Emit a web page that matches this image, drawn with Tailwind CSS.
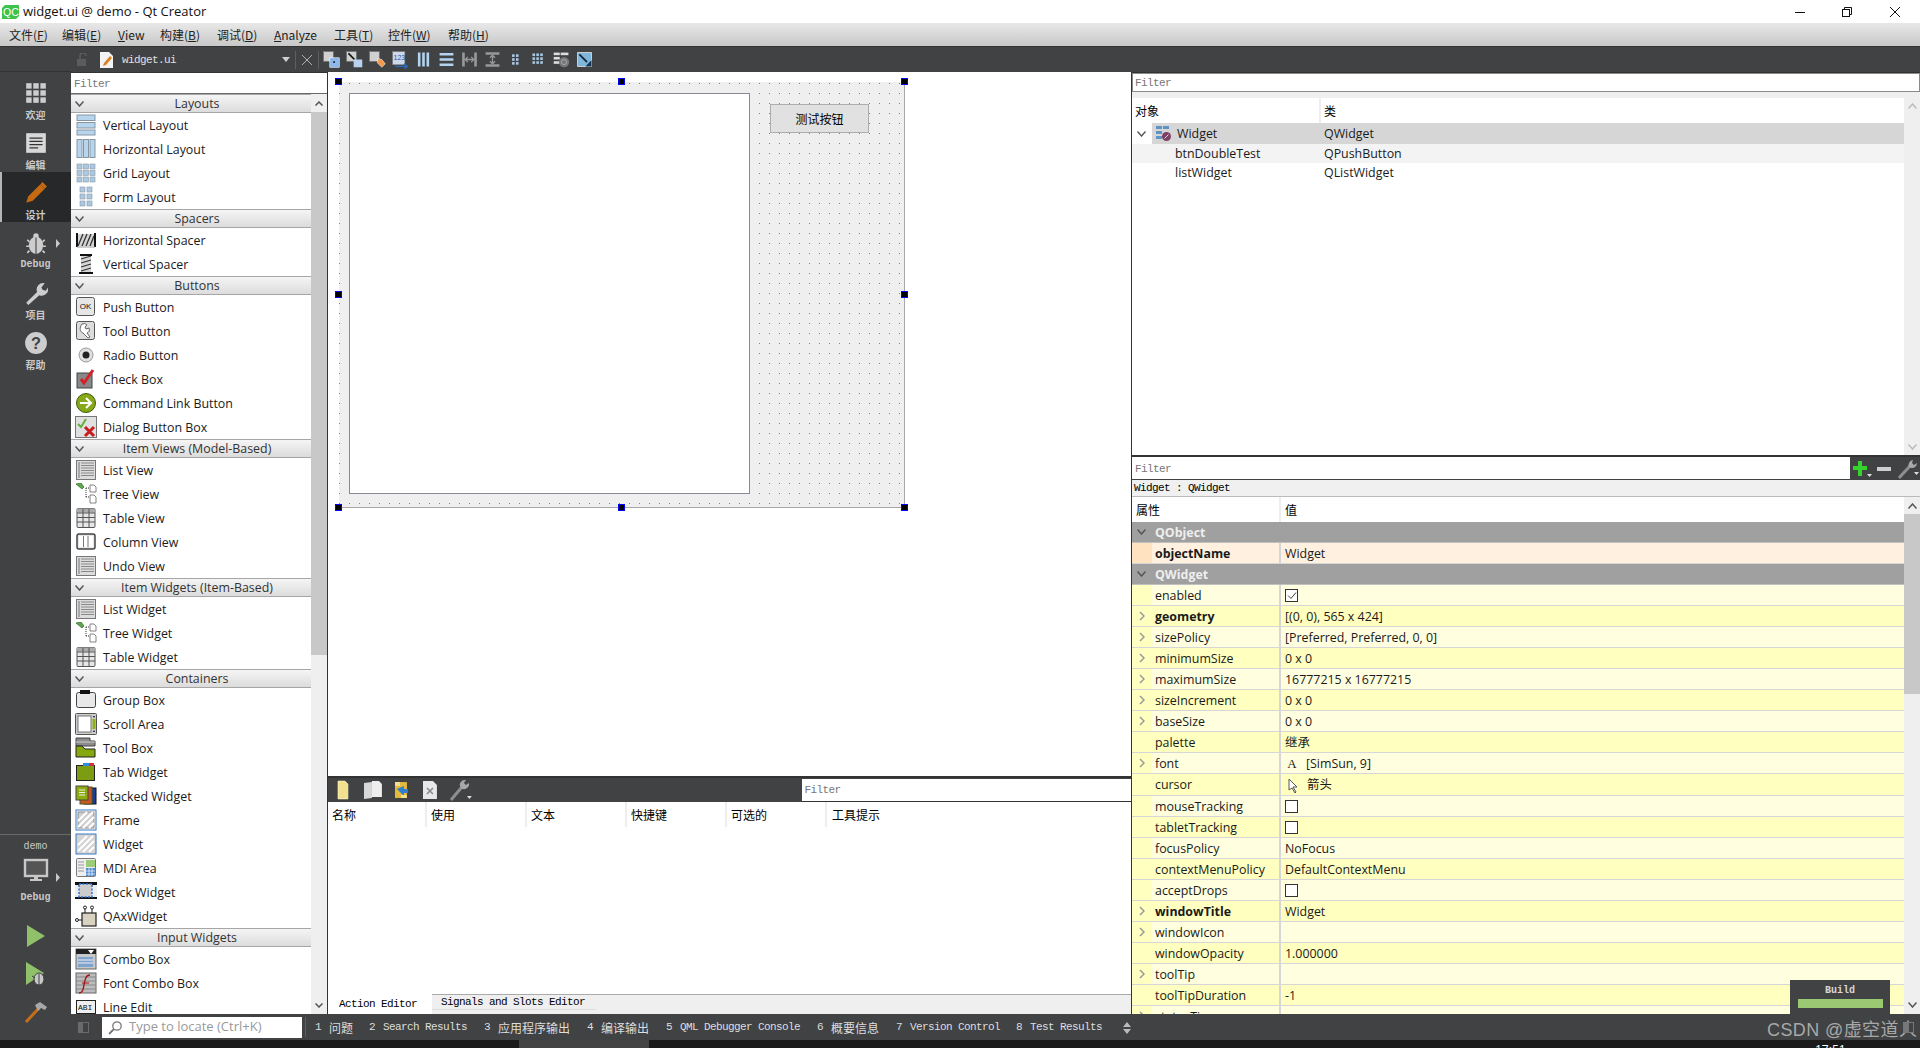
<!DOCTYPE html>
<html lang="en">
<head>
  <meta charset="UTF-8" />
  <title>widget.ui @ demo - Qt Creator</title>
  <script src="https://cdn.jsdelivr.net/npm/@tailwindcss/browser@4"></script>
</head>
<body class="w-[1920px] h-[1048px] overflow-hidden relative flex flex-col bg-[#404244] text-[12.4px] text-[#1a1a1a] font-['Open_Sans','Noto_Sans_CJK_SC',sans-serif]">

  <!-- Title bar -->
  <header class="h-[23px] bg-white flex items-center shrink-0">
    <svg class="ml-[2px]" width="17" height="16" viewBox="0 0 17 16"><path d="M3 1h14v11l-3 3H0V4z" fill="#3fc24b"/><text x="1" y="12" font-size="10.5" font-family="Liberation Sans" fill="#fff">QC</text></svg>
    <span class="ml-[4px] text-[13px] leading-none text-[#111]">widget.ui @ demo - Qt Creator</span>
    <div class="ml-auto flex items-center h-full">
      <svg class="mr-[35px]" width="12" height="12" viewBox="0 0 12 12"><path d="M1 6.5h10" stroke="#111"/></svg>
      <svg class="mr-[36px]" width="12" height="12" viewBox="0 0 12 12" fill="none" stroke="#111"><rect x="1.5" y="3.5" width="7" height="7"/><path d="M3.500 3.500v-2h7v7h-2"/></svg>
      <svg class="mr-[19px]" width="12" height="12" viewBox="0 0 12 12"><path d="M1 1l10 10M11 1L1 11" stroke="#111"/></svg>
    </div>
  </header>

  <!-- Menu bar -->
  <nav id="menu" class="h-[24px] shrink-0 flex items-center pl-[9px] bg-[linear-gradient(#e8e8e8,#c8c8c8)] border-b border-[#333]"></nav>

  <div class="flex-1 flex min-h-0">
    <!-- Mode sidebar -->
    <aside class="w-[71px] shrink-0 flex flex-col bg-[#404244] text-[#c9c9c9]">
      <div class="h-[25px] shrink-0 border-b border-[#333]"></div>
      <div id="modes" class="flex flex-col"></div>
      <div class="flex-1"></div>
      <div class="border-t border-[#6a6a6a] flex flex-col items-center relative pb-[9px]">
        <div class="h-[22px] flex items-center text-[10px] font-['Liberation_Mono']">demo</div>
        <div class="h-[28px] flex items-center">
          <svg width="26" height="26" viewBox="0 0 26 26"><rect x="2" y="2" width="22" height="16" fill="#555" stroke="#c8c8c8" stroke-width="2.4"/><path d="M11 18h4v3h4v2H7v-2h4z" fill="#c8c8c8"/></svg>
        </div>
        <svg class="absolute left-[55px] top-[38px]" width="6" height="9" viewBox="0 0 6 9"><path d="M1 0l4 4.5L1 9z" fill="#c8c8c8"/></svg>
        <div class="h-[24px] flex items-center text-[10px] font-bold font-['Liberation_Mono']">Debug</div>
        <div class="mt-[8px] h-[38px] flex items-center">
          <svg width="20" height="24" viewBox="0 0 20 24"><path d="M1 1l18 11L1 23z" fill="#90c069"/></svg>
        </div>
        <div class="h-[38px] flex items-center">
          <svg width="22" height="26" viewBox="0 0 22 26"><path d="M1 1l18 11L1 24z" fill="#90c069"/><ellipse cx="14" cy="18" rx="5" ry="6" fill="#c8c8c8" stroke="#404244"/><path d="M14 13v11M7 15l3 2M21 15l-3 2M7 22l3-2M21 22l-3-2" stroke="#404244"/></svg>
        </div>
        <div class="h-[38px] flex items-center">
          <svg width="24" height="24" viewBox="0 0 24 24"><path d="M2 22L15 8" stroke="#c76f17" stroke-width="3"/><path d="M11 5l5-3 7 5-2 3-4-2-3 3z" fill="#a8a8a8"/></svg>
        </div>
      </div>
    </aside>

    <div class="flex-1 flex flex-col min-w-0">
      <!-- Editor toolbar -->
      <div class="h-[25px] shrink-0 bg-[#404244] flex items-center relative">
        <svg class="ml-[5px]" width="14" height="14" viewBox="0 0 14 14"><rect x="1" y="6" width="9" height="7" fill="#5c5c5c"/><path d="M4 6V3a3 3 0 0 1 6 0" fill="none" stroke="#5c5c5c" stroke-width="1.5"/></svg>
        <svg class="ml-[9px]" width="15" height="18" viewBox="0 0 15 18"><path d="M1 1h9l4 4v12H1z" fill="#f3f3f3"/><path d="M4 15l1-3 6-7 2 2-6 7z" fill="#dc7f24"/></svg>
        <span class="ml-[8px] w-[160px] pt-[2px] text-[11px] tracking-[-0.6px] text-[#e0e0e0] font-['Liberation_Mono']">widget.ui</span>
        <svg width="8" height="5" viewBox="0 0 8 5"><path d="M0 0h8L4 5z" fill="#d0d0d0"/></svg>
        <div class="ml-[5px] w-px h-[18px] bg-[#5e5e5e]"></div>
        <svg class="ml-[6px]" width="10" height="10" viewBox="0 0 10 10"><path d="M0 0l10 10M10 0L0 10" stroke="#b0b0b0"/></svg>
        <div class="ml-[6px] w-px h-[18px] bg-[#5e5e5e]"></div>
        <div id="formTools" class="flex items-center ml-[1px]"></div>
      </div>

      <div class="flex-1 flex min-h-0">
        <!-- Widget box -->
        <section class="w-[256px] shrink-0 flex flex-col bg-white border-t border-[#333] min-h-0">
          <div class="h-[20px] shrink-0 flex items-center pl-[3px] pt-[2px] bg-white text-[#777] text-[11px] tracking-[-0.6px] font-['Liberation_Mono']">Filter</div>
          <div class="h-px shrink-0 bg-[#6b6b6b]"></div>
          <div class="flex-1 flex min-h-0">
            <div id="widgetBox" class="w-[240px] overflow-hidden"></div>
            <div class="w-[16px] flex flex-col items-center bg-[#efefef] relative">
              <div class="h-[18px] flex items-center"><svg width="8" height="5" viewBox="0 0 8 5"><path d="M0.5 4.5L4 1l3.5 3.5" fill="none" stroke="#555" stroke-width="1.5"/></svg></div>
              <div class="w-full h-[543px] bg-[#c8c8c8]"></div>
              <div class="mt-auto h-[18px] flex items-center"><svg width="8" height="5" viewBox="0 0 8 5"><path d="M0.5 0.5L4 4l3.5-3.5" fill="none" stroke="#555" stroke-width="1.5"/></svg></div>
            </div>
          </div>
        </section>
        <div class="w-px shrink-0 bg-[#333]"></div>

        <!-- Central form + action editor -->
        <section class="w-[803px] shrink-0 flex flex-col">
          <div class="h-[704px] shrink-0 bg-white pl-[11px] pt-[10px]">
            <div class="relative w-[566px] h-[426px] bg-[#efefef] [background-image:radial-gradient(circle_at_0.5px_1.5px,#808080_0.6px,transparent_0.9px)] [background-size:10px_10px] border-r border-b border-[#a8a8a8]">
              <div class="absolute left-[10px] top-[11px] w-[401px] h-[401px] bg-white border border-[#8a8a96]"></div>
              <div class="absolute left-[431px] top-[22px] w-[99px] h-[29px] bg-[#e1e1e1] border border-[#adadad] flex items-center justify-center text-[12px] text-black font-['Noto_Sans_CJK_SC',sans-serif]">测试按钮</div>
              <div class="absolute left-[-4px] top-[-4px] w-[7px] h-[7px] bg-black border border-[#0000ff]"></div>
              <div class="absolute left-[279px] top-[-4px] w-[7px] h-[7px] bg-black border border-[#0000ff]"></div>
              <div class="absolute left-[562px] top-[-4px] w-[7px] h-[7px] bg-black border border-[#0000ff]"></div>
              <div class="absolute left-[-4px] top-[209px] w-[7px] h-[7px] bg-black border border-[#0000ff]"></div>
              <div class="absolute left-[562px] top-[209px] w-[7px] h-[7px] bg-black border border-[#0000ff]"></div>
              <div class="absolute left-[-4px] top-[422px] w-[7px] h-[7px] bg-black border border-[#0000ff]"></div>
              <div class="absolute left-[279px] top-[422px] w-[7px] h-[7px] bg-black border border-[#0000ff]"></div>
              <div class="absolute left-[562px] top-[422px] w-[7px] h-[7px] bg-black border border-[#0000ff]"></div>
            </div>
          </div>
          <div class="h-[2px] shrink-0 bg-[#333]"></div>
          <div class="h-[24px] shrink-0 bg-[#404244] flex items-center">
            <svg class="ml-[7px]" width="16" height="20" viewBox="0 0 16 20"><path d="M3 1h7l3 3v15H3z" fill="#f3e08e" stroke="#fff6c8" stroke-width=".6"/></svg>
            <svg class="ml-[12px]" width="20" height="20" viewBox="0 0 20 20"><path d="M1 3l8-1v16l-8 1z" fill="#d8d8d8"/><path d="M9 1h7l3 3v13H9z" fill="#eee"/></svg>
            <svg class="ml-[10px]" width="18" height="20" viewBox="0 0 18 20"><path d="M2 2h12v16H2z" fill="#e3b93e"/><path d="M4 9l7-3v3h4v4h-4v3z" fill="#2f7fd0"/><path d="M2 2h5v4H2zM8 15h6v3H8z" fill="#f3e08e"/></svg>
            <svg class="ml-[11px]" width="16" height="20" viewBox="0 0 16 20"><path d="M1 1h10l4 4v14H1z" fill="#e8e8e8"/><path d="M5 8l6 6M11 8l-6 6" stroke="#888" stroke-width="1.5"/></svg>
            <svg class="ml-[12px]" width="22" height="22" viewBox="0 0 22 22"><path d="M1 21L12 8" stroke="#8e8e8e" stroke-width="3"/><path d="M11 9a5 5 0 0 1 5-8l-2 3 2 2 3-2a5 5 0 0 1-8 5z" fill="#a8a8a8"/><path d="M17 17h5l-2.500 3z" fill="#ddd"/></svg>
            <div class="ml-[330px] w-[331px] h-[23px] bg-white border-b border-[#333] flex items-center pl-[3px] pt-[2px] text-[#777] text-[11px] tracking-[-0.6px] font-['Liberation_Mono']">Filter</div>
          </div>
          <div class="h-[25px] shrink-0 bg-white flex text-[12px] font-['Noto_Sans_CJK_SC',sans-serif] text-black">
            <div class="w-[99px] pl-[4px] flex items-center border-r-2 border-[#eee]">名称</div>
            <div class="w-[100px] pl-[4px] flex items-center border-r-2 border-[#eee]">使用</div>
            <div class="w-[100px] pl-[4px] flex items-center border-r-2 border-[#eee]">文本</div>
            <div class="w-[100px] pl-[4px] flex items-center border-r-2 border-[#eee]">快捷键</div>
            <div class="w-[100px] pl-[4px] flex items-center border-r-2 border-[#eee]">可选的</div>
            <div class="pl-[5px] flex items-center">工具提示</div>
          </div>
          <div class="flex-1 bg-white"></div>
          <div class="h-[20px] shrink-0 bg-[#efefef] border-t border-[#aaa] flex text-[11px] tracking-[-0.6px] text-black font-['Liberation_Mono']">
            <div class="w-[104px] h-[20px] -mt-px bg-white pl-[11px] flex items-center">Action Editor</div>
            <div class="w-[164px] h-[15px] pl-[9px] pt-[1px] flex items-center border-b border-[#ddd]">Signals and Slots Editor</div>
          </div>
        </section>
        <div class="w-px shrink-0 bg-[#333]"></div>

        <!-- Object inspector + property editor -->
        <section class="flex-1 flex flex-col min-w-0 bg-white">
          <div class="h-[383px] shrink-0 flex flex-col border-t border-[#333]">
            <div class="h-[19px] shrink-0 flex items-center pl-[2px] pt-[2px] border border-[#8a8a8a] text-[#777] text-[11px] tracking-[-0.6px] font-['Liberation_Mono']">Filter</div>
            <div class="h-[6px] shrink-0 bg-[#efefef]"></div>
            <div class="flex-1 flex min-h-0">
              <div class="flex-1">
                <div class="h-[25px] flex text-[12px] font-['Noto_Sans_CJK_SC',sans-serif] text-black">
                  <div class="w-[189px] pl-[3px] flex items-center border-r-2 border-[#eee]">对象</div>
                  <div class="pl-[3px] flex items-center">类</div>
                </div>
                <div class="h-[21px] flex items-center">
                  <svg class="ml-[5px]" width="9" height="6" viewBox="0 0 9 6"><path d="M.5 .5L4.500 5 8.500 .5" fill="none" stroke="#555" stroke-width="1.400"/></svg>
                  <div class="ml-[6px] flex-1 h-full bg-[#d6d6d6] flex items-center">
                    <svg class="ml-[3px]" width="17" height="17" viewBox="0 0 17 17"><rect x="1" y="1" width="6" height="3" fill="#5d95c8"/><rect x="8" y="1" width="6" height="3" fill="#5d95c8"/><rect x="1" y="6" width="6" height="3" fill="#5d95c8"/><rect x="1" y="11" width="6" height="3" fill="#5d95c8"/><circle cx="11.500" cy="11.500" r="4.500" fill="#7d3f66"/><path d="M9.500 13.500l4-4" stroke="#ddd"/></svg>
                    <span class="ml-[5px] pt-[2px] w-[147px]">Widget</span><span class="pt-[2px]">QWidget</span>
                  </div>
                </div>
                <div class="h-[19px] flex items-center bg-[#f3f3f3] pl-[43px]"><span class="pt-[2px] w-[149px]">btnDoubleTest</span><span class="pt-[2px]">QPushButton</span></div>
                <div class="h-[19px] flex items-center pl-[43px]"><span class="pt-[2px] w-[149px]">listWidget</span><span class="pt-[2px]">QListWidget</span></div>
              </div>
              <div class="w-[16px] bg-[#efefef] flex flex-col items-center justify-between py-[5px]">
                <svg width="9" height="6" viewBox="0 0 9 6"><path d="M.5 5.500L4.500 1l4 4.500" fill="none" stroke="#bbb" stroke-width="1.500"/></svg>
                <svg width="9" height="6" viewBox="0 0 9 6"><path d="M.5 .5L4.500 5l4-4.500" fill="none" stroke="#bbb" stroke-width="1.500"/></svg>
              </div>
            </div>
          </div>
          <div class="h-[2px] shrink-0 bg-[#333]"></div>
          <div class="h-[23px] shrink-0 flex bg-[#404244]">
            <div class="w-[718px] h-[22px] bg-white flex items-center pl-[3px] pt-[2px] text-[#777] text-[11px] tracking-[-0.6px] font-['Liberation_Mono']">Filter</div>
            <div class="flex items-center">
              <svg class="ml-[2px]" width="20" height="18" viewBox="0 0 20 18"><path d="M6 1h4v5h5v4h-5v6H6v-6H1V6h5z" fill="#35d42c"/><path d="M15 14h5l-2.500 3z" fill="#ddd"/></svg>
              <svg class="ml-[4px]" width="16" height="18" viewBox="0 0 16 18"><rect x="1" y="7" width="14" height="4" fill="#cfcfcf"/></svg>
              <svg class="ml-[6px]" width="22" height="20" viewBox="0 0 22 20"><path d="M1 19L12 7" stroke="#8e8e8e" stroke-width="3"/><path d="M11 8a5 5 0 0 1 4-7l-1 3 2 2 3-2a5 5 0 0 1-8 4z" fill="#a8a8a8"/><path d="M16 13h5l-2.500 3z" fill="#ddd"/></svg>
            </div>
          </div>
          <div class="h-[17px] shrink-0 bg-[#f0f0f0] border-b border-[#bbb] flex items-center pl-[2px] text-[11px] tracking-[-0.6px] text-black font-['Liberation_Mono']">Widget : QWidget</div>
          <div class="flex-1 flex min-h-0">
            <div class="flex-1 min-w-0 overflow-hidden">
              <div class="h-[25px] flex text-[12px] font-['Noto_Sans_CJK_SC',sans-serif] text-black">
                <div class="w-[149px] pl-[4px] flex items-center border-r-2 border-[#eee]">属性</div>
                <div class="pl-[4px] flex items-center">值</div>
              </div>
              <div id="props"></div>
            </div>
            <div class="w-[16px] bg-[#efefef] flex flex-col items-center">
              <div class="h-[17px] flex items-center"><svg width="9" height="6" viewBox="0 0 9 6"><path d="M.5 5.500L4.500 1l4 4.500" fill="none" stroke="#555" stroke-width="1.500"/></svg></div>
              <div class="w-full h-[180px] bg-[#c8c8c8]"></div>
              <div class="mt-auto h-[18px] flex items-center"><svg width="9" height="6" viewBox="0 0 9 6"><path d="M.5 .5L4.500 5l4-4.500" fill="none" stroke="#555" stroke-width="1.500"/></svg></div>
            </div>
          </div>
        </section>
      </div>

      <!-- Status bar -->
      <footer class="h-[26px] shrink-0 bg-[#404244] flex items-center text-[#dedede]">
        <svg class="ml-[7px]" width="11" height="11" viewBox="0 0 11 11"><rect width="11" height="11" fill="#6a6a6a"/><rect x="5" y="1" width="5" height="9" fill="#404244"/></svg>
        <div class="ml-[13px] w-[200px] h-[21px] bg-white flex items-center text-[#9a9a9a] text-[13px]">
          <svg class="ml-[6px]" width="15" height="15" viewBox="0 0 15 15"><circle cx="9" cy="6" r="4.200" fill="none" stroke="#777" stroke-width="1.300"/><path d="M6 9l-5 5" stroke="#777" stroke-width="1.800"/></svg>
          <span class="ml-[6px] whitespace-nowrap">Type to locate (Ctrl+K)</span>
        </div>
        <div class="ml-[3px] w-px h-[20px] bg-[#5e5e5e]"></div>
        <div id="outputs" class="ml-[9px] pt-[1px] flex items-center"></div>
      </footer>
    </div>
  </div>

  <!-- Task bar strip, only its top few pixels are on screen -->
  <div class="h-[8px] shrink-0 bg-[#1b1b1b] relative overflow-hidden">
    <div class="absolute left-[519px] top-0 w-[130px] h-[8px] bg-[#444]"></div>
    <span class="absolute left-[1815px] top-[4px] text-[12px] leading-none text-white">17:51</span>
  </div>

  <!-- Build progress popup -->
  <div class="absolute left-[1790px] top-[980px] w-[100px] h-[34px] bg-[#404244] flex flex-col items-center">
    <span class="mt-[4px] h-[14px] leading-[14px] text-[10px] font-bold text-[#d8d8d8] font-['Liberation_Mono']">Build</span>
    <div class="mt-[1px] w-[85px] h-[9px] bg-[#9bc873]"></div>
  </div>

  <!-- Watermark -->
  <div class="absolute left-[1767px] top-[1017px] text-[18px] leading-[26px] tracking-[0.4px] text-[#a8a8a8] font-['Liberation_Sans','Noto_Sans_CJK_SC',sans-serif] whitespace-nowrap">CSDN @虚空道人</div>
  <svg class="absolute left-[1903px] top-[1022px]" width="11" height="11" viewBox="0 0 11 11"><rect width="11" height="11" fill="#777"/><rect x="6" y="1" width="4" height="9" fill="#404244"/></svg>

  <script>
    const svg = (inner, w = 22, h = 22) => `<svg width="${w}" height="${h}" viewBox="0 0 22 22">${inner}</svg>`;
    const gridIcon = (cols, rows, x, y, s, g, fill) => {
      let out = "";
      for (let r = 0; r < rows; r++) for (let c = 0; c < cols; c++)
        out += `<rect x="${x + c * (s + g)}" y="${y + r * (s + g)}" width="${s}" height="${s}" fill="${fill}" stroke="#8c96a0" stroke-width=".6"/>`;
      return out;
    };
    const listLines = `<rect x="1.500" y="1.500" width="19" height="19" fill="#dcdcdc" stroke="#777"/><rect x="3" y="3" width="2" height="16" fill="#aaa"/><path d="M6 4h13M6 6.500h13M6 9h13M6 11.500h13M6 14h13M6 16.500h13" stroke="#8a8a8a" stroke-width="1.200"/>`;
    const treeIcon = `<path d="M1 1l5-1 3 4-2 2z" fill="#5ea64a" stroke="#2f6d2a" stroke-width=".7"/><path d="M11 5h4M11 5v9M11 14h4" stroke="#333" stroke-dasharray="1 1"/><path d="M15 2h4l2 2v5h-6zM15 12h4l2 2v6h-6z" fill="#fff" stroke="#666" stroke-width=".8"/>`;
    const tableIcon = `<rect x="2" y="1.500" width="18" height="19" rx="1" fill="#e6e6e6" stroke="#555"/><rect x="2" y="1.500" width="18" height="4" fill="#aaa"/><path d="M2 6h18M2 10.500h18M2 15h18M8 2v18M14 2v18" stroke="#555"/>`;
    const frameHatch = `<path d="M3 12L12 3M3 18L18 3M8 19L19 8M14 19l5-5" stroke="#fff" stroke-width="2"/>`;
    const icons = {
      vlayout: svg(`<rect x="2" y="1" width="18" height="5.500" fill="#b7d5ee" stroke="#8795a2"/><rect x="2" y="8.500" width="18" height="5.500" fill="#b7d5ee" stroke="#8795a2"/><rect x="2" y="16" width="18" height="5" fill="#b7d5ee" stroke="#8795a2"/>`),
      hlayout: svg(`<rect x="2" y="1.500" width="5" height="18" fill="#b7d5ee" stroke="#8795a2"/><rect x="8.500" y="1.500" width="5" height="18" fill="#b7d5ee" stroke="#8795a2"/><rect x="15" y="1.500" width="5" height="18" fill="#b7d5ee" stroke="#8795a2"/>`),
      grid: svg(gridIcon(3, 3, 2, 2, 5, 1.500, "#a9c8e4")),
      form: svg(gridIcon(2, 3, 5, 1, 5, 2, "#a9c8e4")),
      hspacer: svg(`<rect x="2" y="5" width="18" height="12" fill="#d5d5d5"/><path d="M3 17L8 5M7 17L12 5M11 17L16 5M15 17L19 7" stroke="#333" stroke-width="1.300"/><path d="M2 4v14M20 4v14" stroke="#111" stroke-width="2"/><path d="M2 18h18" stroke="#999"/>`),
      vspacer: svg(`<rect x="6" y="2" width="10" height="18" fill="#d5d5d5"/><path d="M6 6l10-3M6 10l10-3M6 14l10-3M6 18l10-3" stroke="#333" stroke-width="1.300"/><path d="M5 2h12M4 20h14" stroke="#111" stroke-width="2"/>`),
      push: svg(`<rect x="1.500" y="1.500" width="18" height="18" rx="2" fill="#e6e6e6" stroke="#555"/><text x="10.500" y="13" text-anchor="middle" font-size="8" font-family="Liberation Sans" fill="#111">OK</text>`),
      tool: svg(`<rect x="1.500" y="1.500" width="18" height="18" rx="2" fill="#dcdcdc" stroke="#555"/><path d="M7 4a4 4 0 0 1 5 1l-2 2 1 2 3-1c1 3 0 4-2 5l3 4-2 1-5-5c-3-1-4-5-1-9z" fill="#fff" stroke="#666"/>`),
      radio: svg(`<circle cx="11" cy="11" r="7" fill="#e0e0e0" stroke="#999"/><circle cx="11" cy="11" r="3.500" fill="#222"/>`),
      check: svg(`<rect x="2" y="5" width="15" height="15" fill="#888" stroke="#444"/><path d="M6 11l3 4 9-13" fill="none" stroke="#d3222a" stroke-width="3"/>`),
      command: svg(`<circle cx="11" cy="11" r="9.500" fill="#87a818" stroke="#3f5a08"/><path d="M5 11h10M11 6l5 5-5 5" fill="none" stroke="#fff" stroke-width="2"/>`),
      dialog: svg(`<rect x=".5" y=".5" width="21" height="21" fill="#e0e0e0" stroke="#777"/><path d="M3 8l3 3 5-8" fill="none" stroke="#5eb23a" stroke-width="2"/><path d="M10 11l9 9M19 11l-9 9" stroke="#c71d1d" stroke-width="3"/>`),
      list: svg(listLines),
      tree: svg(treeIcon),
      table: svg(tableIcon),
      column: svg(`<rect x="2" y="3" width="18" height="15" rx="2" fill="#e6e6e6" stroke="#444" stroke-width="1.500"/><rect x="4" y="5" width="14" height="11" fill="#fff"/><path d="M8.500 5v11M13 5v11" stroke="#777"/>`),
      group: svg(`<rect x="1.500" y="3.500" width="19" height="15" rx="2" fill="#e8e8e8" stroke="#444"/><rect x="5" y="1" width="10" height="4" fill="#111"/>`),
      scroll: svg(`<rect x=".5" y=".5" width="21" height="21" rx="1" fill="#ccc" stroke="#555"/><rect x="3" y="3" width="13" height="16" fill="#fff" stroke="#777"/><rect x="17.500" y="6" width="3" height="10" fill="#8fb01c"/><path d="M18 3h2l-1 2zM18 19h2l-1-2z" fill="#111"/>`),
      toolbox: svg(`<path d="M1 1h14v3h5v5H1z" fill="#8c8c8c" stroke="#444"/><path d="M1 5h19" stroke="#ccc"/><path d="M1 9h6l3 3h10v8H1z" fill="#86a80f" stroke="#222"/>`),
      tab: svg(`<rect x="1.500" y="4.500" width="18" height="15" fill="#7c9c12" stroke="#222"/><rect x="8" y="2" width="6" height="3" fill="#2f8be0"/><rect x="14" y="2" width="5" height="3" fill="#d83030"/>`),
      stacked: svg(`<rect x="9" y="3" width="12" height="16" fill="#1a3e94" stroke="#111"/><rect x="5" y="2" width="12" height="17" fill="#c5591b" stroke="#553"/><rect x="1" y="1" width="12" height="14" fill="#8cad10" stroke="#444"/><path d="M4 5h6M4 7.500h6M4 10h6" stroke="#eee"/>`),
      frame: svg(`<rect x="1" y="1" width="20" height="20" fill="#fff" stroke="#3a78c2"/><rect x="3" y="3" width="16" height="16" fill="#cfcfcf" stroke="#8a8a8a"/>${frameHatch}`),
      widget: svg(`<rect x="1" y="1" width="20" height="20" fill="#d4d4d4" stroke="#3a78c2"/>${frameHatch}`),
      mdi: svg(`<rect x="1.500" y="1.500" width="19" height="18" rx="1" fill="#eee" stroke="#777"/><rect x="11" y="3" width="9" height="7" fill="#9ccc78"/><rect x="11" y="11" width="9" height="8" fill="#4d8ad0"/><path d="M3 5h6M3 8h6M3 11h6M3 14h6" stroke="#999"/><path d="M11 14h9M11 17h9M14 11v8M17 11v8" stroke="#fff" stroke-width=".7"/>`),
      dock: svg(`<rect x="0" y="1" width="22" height="17" fill="#111"/><rect x="0" y="4" width="22" height="12" fill="#eee"/><rect x="4" y="3" width="13" height="13" fill="#ccc" stroke="#2f6fd0" stroke-dasharray="2 1.500" stroke-width="1.500"/>`),
      qax: svg(`<rect x="7" y="8" width="14" height="13" fill="#d8d2c0" stroke="#222" stroke-width="1.200"/><path d="M10 8V3M17 8V3M0 15h7" stroke="#222"/><circle cx="10" cy="2.500" r="1.500" fill="#fff" stroke="#222"/><circle cx="17" cy="2.500" r="1.500" fill="#fff" stroke="#222"/><circle cx="2" cy="15" r="1.500" fill="#fff" stroke="#222"/>`),
      combo: svg(`<rect x="1" y="1" width="20" height="20" fill="#c8c8c8" stroke="#666"/><rect x="1" y="1" width="20" height="5" fill="#222"/><path d="M13 2h6l-3 4z" fill="#fff"/><rect x="3" y="9" width="15" height="10" fill="#7fa3cf"/><path d="M3 12h15M3 15h15" stroke="#eee"/>`),
      fontcombo: svg(`<rect x="1" y="1" width="20" height="20" fill="#bdbdbd" stroke="#666"/><path d="M1 5h20M1 9h20M1 13h20M1 17h20" stroke="#888" stroke-width="1.200"/><path d="M4 21c3 0 4-2 5-8s2-10 6-10" fill="none" stroke="#a31212" stroke-width="1.400"/><path d="M7 11h7" stroke="#a31212"/>`),
      lineedit: svg(`<rect x="1.500" y="4.500" width="19" height="13" fill="#eee" stroke="#222"/><text x="3" y="14" font-size="8" font-family="Liberation Mono" fill="#111">ABI</text>`),
    };

    const widgetGroups = [
      ["Layouts", [["Vertical Layout", "vlayout"], ["Horizontal Layout", "hlayout"], ["Grid Layout", "grid"], ["Form Layout", "form"]]],
      ["Spacers", [["Horizontal Spacer", "hspacer"], ["Vertical Spacer", "vspacer"]]],
      ["Buttons", [["Push Button", "push"], ["Tool Button", "tool"], ["Radio Button", "radio"], ["Check Box", "check"], ["Command Link Button", "command"], ["Dialog Button Box", "dialog"]]],
      ["Item Views (Model-Based)", [["List View", "list"], ["Tree View", "tree"], ["Table View", "table"], ["Column View", "column"], ["Undo View", "list"]]],
      ["Item Widgets (Item-Based)", [["List Widget", "list"], ["Tree Widget", "tree"], ["Table Widget", "table"]]],
      ["Containers", [["Group Box", "group"], ["Scroll Area", "scroll"], ["Tool Box", "toolbox"], ["Tab Widget", "tab"], ["Stacked Widget", "stacked"], ["Frame", "frame"], ["Widget", "widget"], ["MDI Area", "mdi"], ["Dock Widget", "dock"], ["QAxWidget", "qax"]]],
      ["Input Widgets", [["Combo Box", "combo"], ["Font Combo Box", "fontcombo"], ["Line Edit", "lineedit"]]],
    ];
    document.getElementById("widgetBox").innerHTML = widgetGroups.map(([title, items]) => `
      <div class="h-[19px] relative flex items-center justify-center pl-[12px] pt-[2px] bg-[linear-gradient(#f5f5f5,#dcdcdc)] border-t border-b border-[#a6a6a6] text-[#333]">
        <svg class="absolute left-[4px] top-[6px]" width="9" height="6" viewBox="0 0 9 6"><path d="M.5 .5L4.500 5l4-4.500" fill="none" stroke="#555" stroke-width="1.500"/></svg>
        ${title}
      </div>
      ${items.map(([label, icon]) => `
        <div class="h-[24px] flex items-center pl-[4px]">
          <span class="w-[22px] h-[22px] shrink-0">${icons[icon]}</span>
          <span class="ml-[6px] pt-[2px] whitespace-nowrap">${label}</span>
        </div>`).join("")}
    `).join("");

    const menu = [["文件(", "F", ")", "w-[53px]"], ["编辑(", "E", ")", "w-[56px]"], ["", "V", "iew", "w-[42px]"], ["构建(", "B", ")", "w-[57px]"], ["调试(", "D", ")", "w-[57px]"], ["", "A", "nalyze", "w-[60px]"], ["工具(", "T", ")", "w-[54px]"], ["控件(", "W", ")", "w-[60px]"], ["帮助(", "H", ")", "w-[60px]"]];
    document.getElementById("menu").innerHTML = menu.map(([a, u, b, w]) =>
      `<span class="${w} whitespace-nowrap font-['Noto_Sans_CJK_SC',sans-serif] text-[12px] text-[#222]">${a}<u>${u}</u>${b}</span>`).join("");

    const c = "#cdcdcd";
    const modes = [
      ["欢迎", svg(gridIcon(3, 3, 2, 2, 5, 1.500, c).replaceAll('stroke="#8c96a0"', 'stroke="none"'), 24, 24)],
      ["编辑", svg(`<rect x="2" y="2" width="18" height="18" fill="#d8d8d8"/><path d="M5 6.500h12M5 9.500h12M5 12.500h12M5 15.500h8" stroke="#333"/>`, 24, 24)],
      ["设计", svg(`<path d="M2 20l2-6L15 3l4 4L8 18z" fill="#c66a12"/><path d="M15 3l2-2 4 4-2 2z" fill="#c66a12"/>`, 24, 24)],
      ["Debug", svg(`<ellipse cx="11" cy="13" rx="6.500" ry="8" fill="${c}"/><circle cx="11" cy="4.500" r="2.500" fill="${c}"/><path d="M11 6v15" stroke="#404244"/><path d="M3 8l2 2M19 8l-2 2M2 14h3M20 14h-3M3 20l2-2M19 20l-2-2" stroke="${c}" stroke-width="1.500"/>`, 24, 24)],
      ["项目", svg(`<path d="M2 20l10-10a6 6 0 0 1 7-8l-3 4 1 2 3 1 2-3a6 6 0 0 1-8 7L4 22z" fill="${c}"/>`, 24, 24)],
      ["帮助", svg(`<circle cx="11" cy="11" r="10" fill="${c}"/><text x="11" y="16.500" text-anchor="middle" font-size="15" font-weight="bold" font-family="Liberation Sans" fill="#404244">?</text>`, 24, 24)],
    ];
    document.getElementById("modes").innerHTML = modes.map(([label, icon], i) => `
      <div class="h-[50px] relative flex flex-col items-center pt-[9px] ${i === 2 ? "bg-[#262829] border-l-2 border-[#b5b5b5] pr-[2px]" : ""}">
        <span class="h-[24px]">${icon}</span>
        <span class="mt-[3px] text-[10px] leading-[14px] font-bold ${label === "Debug" ? "font-['Liberation_Mono']" : ""}">${label}</span>
        ${label === "Debug" ? `<svg class="absolute left-[55px] top-[17px]" width="6" height="9" viewBox="0 0 6 9"><path d="M1 0l4 4.500L1 9z" fill="#c8c8c8"/></svg>` : ""}
      </div>`).join("");

    const tool = inner => svg(inner, 19, 19);
    const back = `<rect x="2" y="2" width="11" height="11" fill="#d0d0d0" stroke="#888" stroke-width=".6"/>`;
    const formTools = [
      tool(back + `<rect x="9" y="9" width="11" height="11" fill="#8fb8e8" stroke="#fff" stroke-width=".6"/><rect x="13" y="13" width="2" height="2" fill="#123"/>`),
      tool(back + `<path d="M4 4l7 7" stroke="#111" stroke-width="2"/><rect x="10" y="11" width="10" height="9" fill="#b9d2ee"/>`),
      tool(back + `<path d="M11 10l5 1 4 5-4 4-5-5z" fill="#f29a4b" stroke="#fff" stroke-width=".6"/>`),
      tool(`<rect x="2" y="2" width="14" height="15" fill="#cfd8e8" stroke="#888" stroke-width=".6"/><text x="3" y="12" font-size="8" font-family="Liberation Sans" fill="#1f55b0">123</text><path d="M5 19h13M15 16l4 3-4 3" fill="none" stroke="#2b6cc4" stroke-width="1.500"/>`),
      tool(`<path d="M6 3v16M11 3v16M16 3v16" stroke="#b3d4f0" stroke-width="3"/>`),
      tool(`<path d="M3 5h16M3 11h16M3 17h16" stroke="#b3d4f0" stroke-width="3"/>`),
      tool(`<path d="M4 3v16M18 3v16" stroke="#999" stroke-width="3"/><path d="M6 11h10M9 8l-3 3 3 3M13 8l3 3-3 3" fill="none" stroke="#999" stroke-width="1.500"/>`),
      tool(`<path d="M3 4h16M3 18h16" stroke="#999" stroke-width="3"/><path d="M11 6v10M8 9l3-3 3 3M8 13l3 3 3-3" fill="none" stroke="#999" stroke-width="1.500"/>`),
      tool(gridIcon(2, 3, 7, 5, 3, 1.500, "#a9c8e4").replaceAll('stroke="#8c96a0"', 'stroke="none"')),
      tool(gridIcon(3, 3, 4, 4, 3, 1.500, "#a9c8e4").replaceAll('stroke="#8c96a0"', 'stroke="none"')),
      tool(`<rect x="2" y="3" width="7" height="3" fill="#ddd"/><rect x="10" y="3" width="9" height="3" fill="#ddd"/><rect x="2" y="8" width="7" height="3" fill="#ddd"/><rect x="2" y="13" width="7" height="3" fill="#ddd"/><circle cx="14" cy="14" r="6" fill="#777"/><circle cx="14" cy="14" r="3" fill="none" stroke="#aaa"/>`),
      tool(`<rect x="3" y="3" width="16" height="16" fill="#7fb6dc" stroke="#ddd"/><path d="M5 5l9 9" stroke="#123" stroke-width="2"/><path d="M19 12v7h-7z" fill="#135"/>`),
    ];
    document.getElementById("formTools").innerHTML = formTools.map(t => `<span class="w-[23px] flex items-center justify-center">${t}</span>`).join("");

    const outputs = [
      ["1", "问题", "w-[54px]", true], ["2", "Search Results", "w-[115px]"], ["3", "应用程序输出", "w-[103px]", true], ["4", "编译输出", "w-[79px]", true],
      ["5", "QML Debugger Console", "w-[151px]"], ["6", "概要信息", "w-[79px]", true], ["7", "Version Control", "w-[120px]"], ["8", "Test Results", "w-[110px]"],
    ];
    document.getElementById("outputs").innerHTML = outputs.map(([n, label, w, cjk]) => `
      <span class="${w} flex items-center whitespace-nowrap">
        <span class="w-[13px] text-[11px] font-['Liberation_Mono']">${n}</span>
        <span class="ml-[1px] ${cjk ? "text-[12px] font-['Noto_Sans_CJK_SC',sans-serif]" : "text-[11px] tracking-[-0.6px] font-['Liberation_Mono']"}">${label}</span>
      </span>`).join("") +
      `<svg class="ml-[-3px]" width="8" height="12" viewBox="0 0 8 12"><path d="M4 0l4 5H0zM4 12l4-5H0z" fill="#bbb"/></svg>`;

    // [name, value, kind, has arrow]
    const props = [
      ["QObject", "", "group"],
      ["objectName", "Widget", "orange"],
      ["QWidget", "", "group"],
      ["enabled", "checked", "", false],
      ["geometry", "[(0, 0), 565 x 424]", "bold", true],
      ["sizePolicy", "[Preferred, Preferred, 0, 0]", "", true],
      ["minimumSize", "0 x 0", "", true],
      ["maximumSize", "16777215 x 16777215", "", true],
      ["sizeIncrement", "0 x 0", "", true],
      ["baseSize", "0 x 0", "", true],
      ["palette", "继承", "", false],
      ["font", "font", "", true],
      ["cursor", "cursor", "", false],
      ["mouseTracking", "unchecked", "", false],
      ["tabletTracking", "unchecked", "", false],
      ["focusPolicy", "NoFocus", "", false],
      ["contextMenuPolicy", "DefaultContextMenu", "", false],
      ["acceptDrops", "unchecked", "", false],
      ["windowTitle", "Widget", "bold", true],
      ["windowIcon", "", "", true],
      ["windowOpacity", "1.000000", "", false],
      ["toolTip", "", "", true],
      ["toolTipDuration", "-1", "", false],
      ["statusTip", "", "", true],
    ];
    const arrow = `<svg class="ml-[7px]" width="6" height="10" viewBox="0 0 6 10"><path d="M1 1l4 4-4 4" fill="none" stroke="#999" stroke-width="1.500"/></svg>`;
    const box = mark => `<span class="w-[13px] h-[13px] bg-white border border-[#333] flex items-center justify-center">${mark ? `<svg width="11" height="11" viewBox="0 0 11 11"><path d="M2 5.500l3 3 5-6" fill="none" stroke="#444"/></svg>` : ""}</span>`;
    const renderValue = v => {
      if (v === "checked") return box(true);
      if (v === "unchecked") return box(false);
      if (v === "font") return `<span class="w-[14px] text-center font-['Liberation_Serif'] text-[13px]">A</span><span class="ml-[7px]">[SimSun, 9]</span>`;
      if (v === "cursor") return `<svg width="14" height="16" viewBox="0 0 14 16"><path d="M4 1v11l3-2 3 5 1-1-3-5h4z" fill="#fff" stroke="#555"/></svg><span class="ml-[8px]">箭头</span>`;
      return v;
    };
    let zebra = false;
    document.getElementById("props").innerHTML = props.map(([name, value, kind, hasArrow]) => {
      if (kind === "group") {
        zebra = false;
        return `<div class="h-[21px] bg-[#a0a0a0] border-b border-[#c0c0c0] flex items-center text-[#eeeeee] font-bold">
          <svg class="ml-[5px]" width="9" height="6" viewBox="0 0 9 6"><path d="M.5 .5L4.500 5l4-4.500" fill="none" stroke="#555" stroke-width="1.500"/></svg>
          <span class="ml-[9px] pt-[2px]">${name}</span></div>`;
      }
      zebra = !zebra;
      let bg = zebra ? "bg-[#ffffdf]" : "bg-[#ffffbf]", gutter = "bg-[#ffffbf]";
      if (kind === "orange") { bg = "bg-[#fff0df]"; gutter = "bg-[#ffe2bf]"; }
      return `<div class="${name === "cursor" ? "h-[22px]" : "h-[21px]"} ${bg} border-b border-[#d6d6d6] flex">
        <span class="w-[20px] ${gutter} flex items-center">${hasArrow ? arrow : ""}</span>
        <span class="w-[129px] pl-[3px] pt-[2px] flex items-center border-r-2 border-[#d6d6d6] whitespace-nowrap ${kind === "orange" || kind === "bold" ? "font-bold" : ""}">${name}</span>
        <span class="pl-[4px] ${value === "checked" || value === "unchecked" ? "" : "pt-[2px]"} flex items-center whitespace-nowrap">${renderValue(value)}</span>
      </div>`;
    }).join("");
  </script>
</body>
</html>
